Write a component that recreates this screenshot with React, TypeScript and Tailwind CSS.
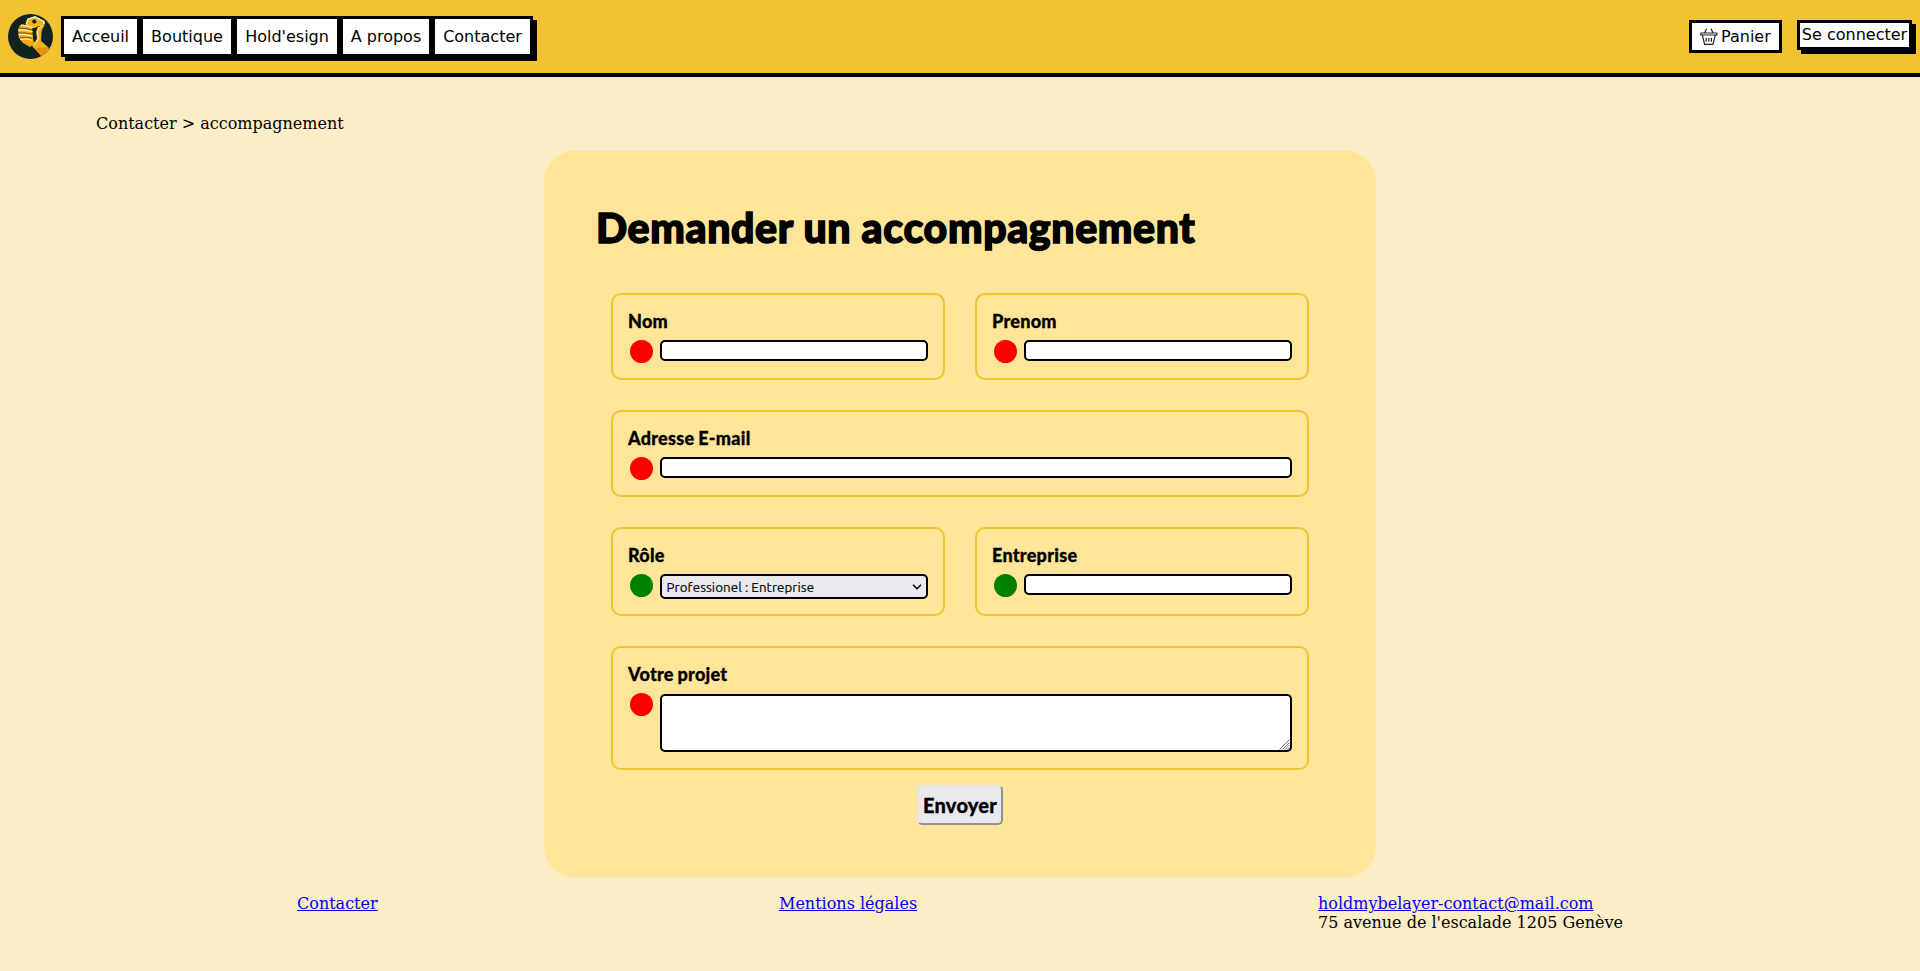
import type { ReactNode } from "react";

const navItems = [
  { label: "Acceuil", width: "w-[79px]" },
  { label: "Boutique", width: "w-[94px]" },
  { label: "Hold'esign", width: "w-[106px]" },
  { label: "A propos", width: "w-[92px]" },
  { label: "Contacter", width: "w-[101px]" },
];

function Logo() {
  return (
    <svg viewBox="0 0 45 45" className="size-[45px] shrink-0">
      <defs>
        <clipPath id="disc">
          <circle cx="22.5" cy="22.5" r="22.5" />
        </clipPath>
      </defs>
      <g clipPath="url(#disc)">
        <rect width="45" height="45" fill="#11231f" />
        <path d="M17.5 11 L20 5 L27 2.5 L37 8 L36 13 L31 12 L27 15 L24 14 L18 12Z" fill="#f5b71c" />
        <path d="M29 13 L35.5 12 L33.5 18 L33 27 L41 34 L36 45 L24 32 L28.5 25 L27 19Z" fill="#f5b11c" />
        <path d="M27 34 L40 33 L36 45Z" fill="#e8900f" />
        <path d="M12 11 L24 13 L25 25 L26.5 30 L22 33 L15 29 L11 24 L10 16Z" fill="#f2a915" />
        <path d="M18 10 L20 5 L27 2.6 L36 7.4 L36 10" stroke="#fff3c4" strokeWidth="1.3" fill="none" />
        <path d="M13.5 11 Q18 11.5 24 13.5 M11 16 Q17 15.5 24 17.5 M11 20.7 Q17 20 24 22 M13 25.5 Q18 24.2 23 26" stroke="#fff0b8" strokeWidth="1.3" fill="none" strokeLinecap="round" />
        <path d="M11 14.3 Q17 13.8 24.5 16 M10 19 Q17 18.2 24.5 20.3 M12 23.8 Q18 22.5 24 24.3" stroke="#5b3c0c" strokeWidth="0.8" fill="none" />
        <path d="M25 14.5 L30 12.5 L28 18 L29 24 L27 28 L25.5 22Z" fill="#11231f" />
        <path d="M34.5 12 L31 14 L29.5 18 L30.5 25 L26 31" stroke="#ffedac" strokeWidth="1" fill="none" />
        <circle cx="26.3" cy="7.6" r="2.1" fill="#11231f" />
      </g>
    </svg>
  );
}

function Basket() {
  return (
    <svg viewBox="0 0 18 18" className="h-[18px] w-[18px]" fill="none" stroke="#222" strokeWidth="1.2" strokeLinejoin="round">
      <path d="M.8 5H16.8V7H.8ZM2.4 7.2L4.6 16.4H13L15.2 7.2M4.6 4.8L6.6 .8M13 4.8L11 .8" />
      <path d="M6.2 10V13.8M8.8 10V13.8M11.4 10V13.8" />
    </svg>
  );
}

function Field({ label, ok, className = "", children }: { label: string; ok?: boolean; className?: string; children: ReactNode }) {
  return (
    <div className={`rounded-[10px] border-2 border-[#f1c232] px-[15px] pt-[15px] ${className}`}>
      <label className="block h-[30px] text-[18px] leading-[22px] font-black tracking-[0.27px] [-webkit-text-stroke:0.3px_black] [word-spacing:-0.8px]">{label}</label>
      <div className="flex items-start">
        <span className={`mr-[7px] ml-[2px] size-[23px] shrink-0 rounded-full ${ok ? "bg-[#008000]" : "bg-[#ff0000]"}`} />
        {children}
      </div>
    </div>
  );
}

const inputClass = "block h-[21px] min-w-0 flex-1 rounded-[5px] border-2 border-black bg-white";

export default function App() {
  return (
    <div className="h-[971px] overflow-hidden bg-[#fbedc6] font-['DejaVu_Serif',serif] text-[16px] text-black">
      <header className="flex h-[77px] items-start border-b-4 border-black bg-[#f1c232] pl-2 font-['DejaVu_Sans',sans-serif] leading-[19px]">
        <div className="pt-[14px]">
          <Logo />
        </div>
        <nav className="ml-2 flex pt-4">
          {navItems.map((item) => (
            <a key={item.label} href="#" className={`flex h-[41px] items-center justify-center border-[3px] border-black bg-white shadow-[4px_4px_0_#000] ${item.width}`}>
              {item.label}
            </a>
          ))}
        </nav>
        <div className="mr-2 ml-auto flex items-start pt-5">
          <a href="#" className="flex h-[33px] w-[93px] items-center border-[3px] border-black bg-white pl-2">
            <Basket />
            <span className="ml-[3px]">Panier</span>
          </a>
          <a href="#" className="ml-[15px] flex h-[30px] w-[115px] items-center justify-center border-[3px] border-black bg-white pb-px whitespace-nowrap shadow-[4px_4px_0_#000]">
            Se connecter
          </a>
        </div>
      </header>

      <p className="mt-[37px] ml-24 leading-[19px]">Contacter &gt; accompagnement</p>

      <main className="mx-auto mt-[18px] h-[726px] w-[832px] rounded-[30px] bg-[#ffe599] pt-[52px] font-['Lato',sans-serif]">
        <h1 className="ml-[52px] text-[41px] leading-[50px] font-black tracking-[0.66px] whitespace-nowrap [-webkit-text-stroke:1.5px_black]">Demander un accompagnement</h1>
        <form className="mt-10 ml-[67px] grid w-[698px] grid-cols-2 gap-[30px]">
          <Field label="Nom" className="h-[87px]">
            <input className={inputClass} />
          </Field>
          <Field label="Prenom" className="h-[87px]">
            <input className={inputClass} />
          </Field>
          <Field label="Adresse E-mail" className="col-span-2 h-[87px]">
            <input className={inputClass} />
          </Field>
          <Field label="Rôle" ok className="h-[89px]">
            <button type="button" className="flex h-[25px] flex-1 items-center justify-between rounded-[5px] border-2 border-black bg-[#e9e9ed] pr-1 pl-[4.5px] font-['Ubuntu','Noto_Sans',sans-serif] text-[13.33px] leading-[18px]">
              <span className="pt-[2px] tracking-[0.08px] [-webkit-text-stroke:0.15px_black]">Professionel : Entreprise</span>
              <svg viewBox="0 0 10 6" className="h-[6px] w-[10px]" fill="none" stroke="#000" strokeWidth="1.5">
                <path d="M1 .8L5 4.8L9 .8" />
              </svg>
            </button>
          </Field>
          <Field label="Entreprise" ok className="h-[89px]">
            <input className={inputClass} />
          </Field>
          <Field label="Votre projet" className="col-span-2 h-[124px]">
            <div className="relative mt-px flex h-[58px] min-w-0 flex-1">
              <textarea className="block h-full w-full resize-none rounded-[5px] border-2 border-black bg-white" />
              <svg viewBox="0 0 11 11" className="pointer-events-none absolute right-[2px] bottom-[2px] size-[11px]" stroke="#666" strokeWidth="0.9">
                <path d="M.5 10.5L10.5 .5M3.5 10.5L10.5 3.5M6 10.5L10.5 6M8.5 10.5L10.5 8.5" />
              </svg>
            </div>
          </Field>
        </form>
        <button className="mx-auto mt-[15px] block h-10 w-[86px] rounded-[5px] border-2 border-t-[#e3e3e6] border-r-[#8f8f9d] border-b-[#8f8f9d] border-l-[#e3e3e6] bg-[#e9e9ed] text-[20px] leading-6 font-black tracking-[0.2px] [-webkit-text-stroke:0.3px_black]">
          Envoyer
        </button>
      </main>

      <footer className="flex pt-[17px] pl-[297px] leading-[19px]">
        <a href="#" className="w-[482px] text-[#0000ee] underline">Contacter</a>
        <a href="#" className="w-[539px] text-[#0000ee] underline">Mentions légales</a>
        <address className="not-italic">
          <a href="#" className="block text-[#0000ee] underline">holdmybelayer-contact@mail.com</a>
          75 avenue de l'escalade 1205 Genève
        </address>
      </footer>
    </div>
  );
}
